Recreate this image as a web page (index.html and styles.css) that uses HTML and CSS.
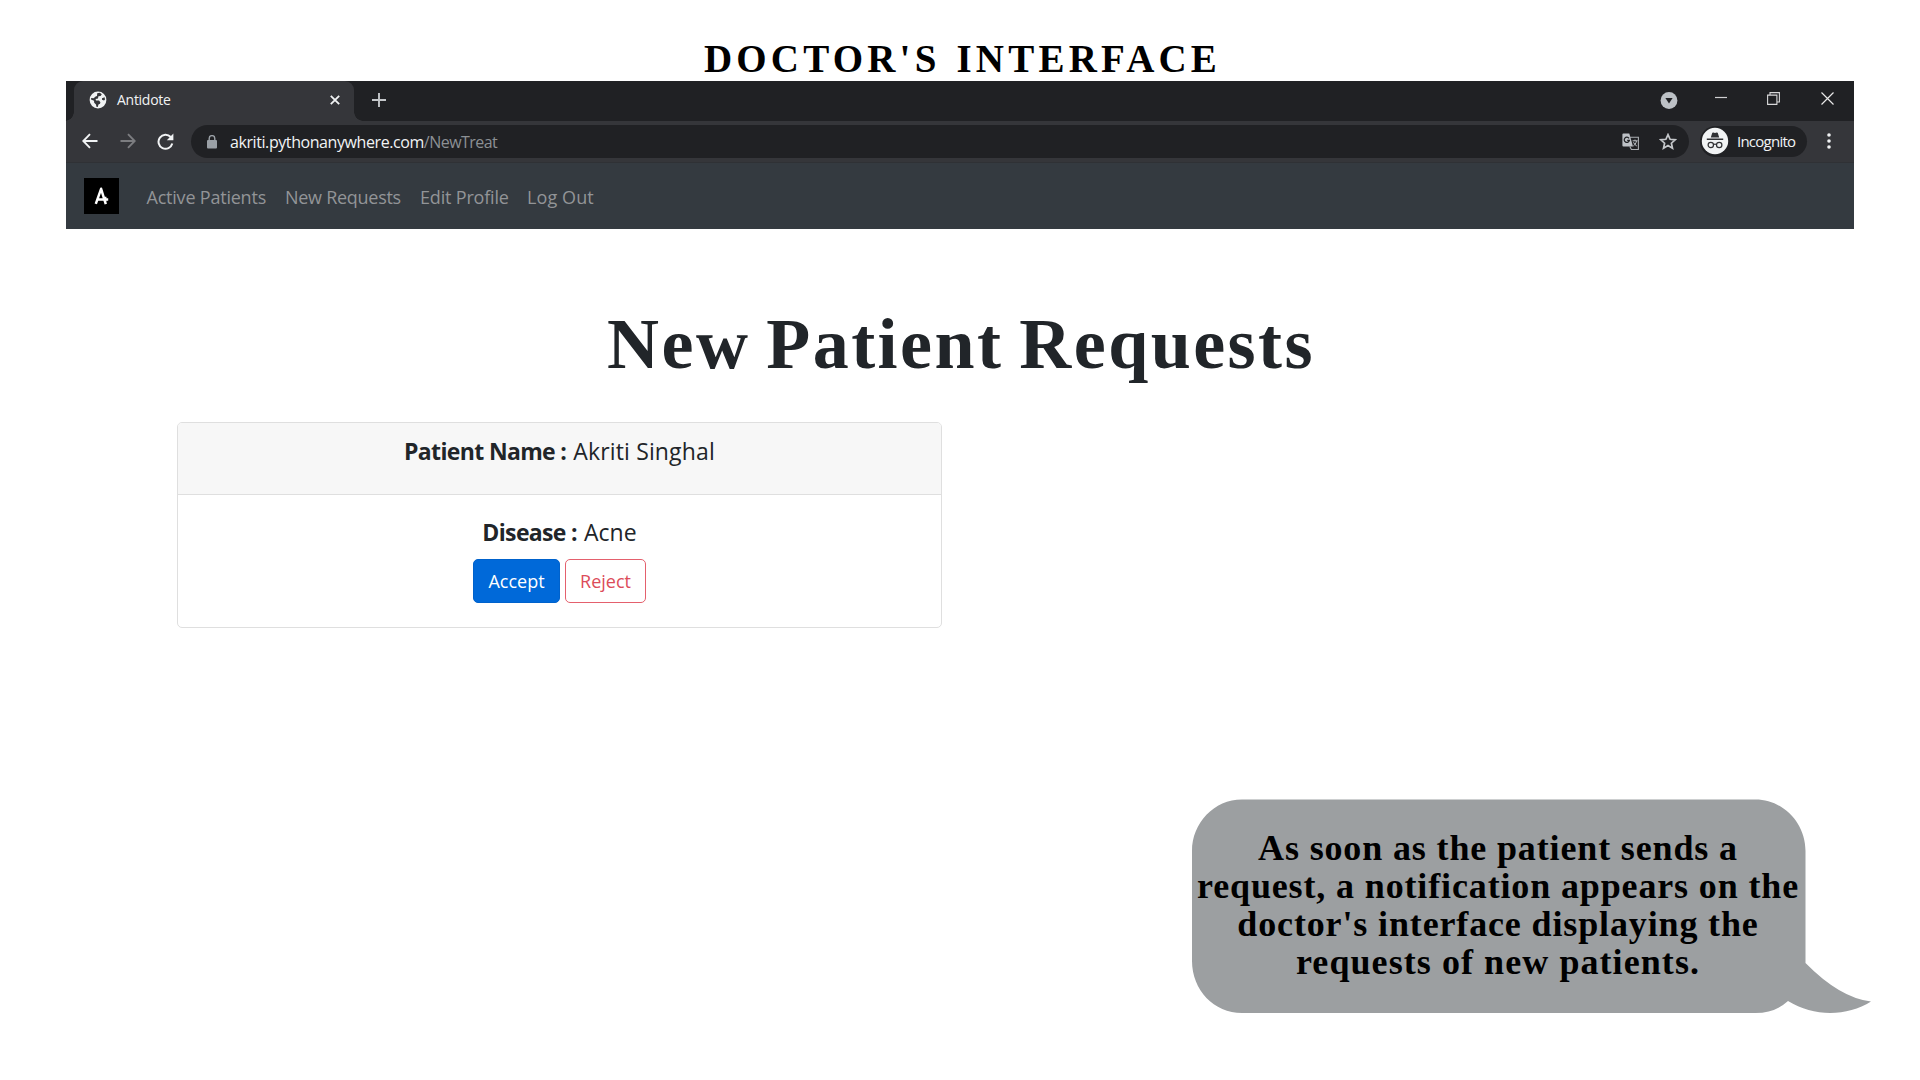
FILE: index.html
```html
<!DOCTYPE html>
<html lang="en">
<head>
<meta charset="utf-8">
<title>Doctor's Interface</title>
<link rel="stylesheet" href="styles.css">
</head>
<body>
<h2 class="slide-title">DOCTOR'S INTERFACE</h2>
<section class="browser">
  <div class="tabstrip">
    <div class="tab">
      <svg class="globe" width="18" height="18" viewBox="0 0 18 18"><circle cx="9" cy="9" r="8.4" fill="#f1f3f4"/><path d="M8.2 2.3 10.8 1.8 12.8 3.2 11.6 5 9.4 5.2 9 7.4 6.6 8 7 9.4 10 9.6 11.4 11.2 11 12.8 9.4 13.6 8.8 16 7.4 15.8 7 13.4 5.2 11.8 5 9.8 2 8.6 2.2 7 4.6 7.2 6.6 5.6 8 5Z" fill="#35363a"/><path d="M13 7.2 15.6 6.2 16 8.4 15 9.4 13 8.8Z" fill="#35363a"/></svg>
      <span class="tab-name">Antidote</span>
      <svg class="tab-close" width="10" height="10" viewBox="0 0 10 10"><path d="M.8.8 9.2 9.2M9.2.8.8 9.2" stroke="#f1f3f4" stroke-width="1.8"/></svg>
    </div>
    <svg class="plus" width="14" height="14" viewBox="0 0 14 14"><path d="M7 0V14M0 7H14" stroke="#c4c7ca" stroke-width="1.9"/></svg>
    <div class="window-controls">
      <svg width="18" height="18" viewBox="0 0 18 18"><circle cx="9" cy="9.5" r="8.4" fill="#bdc1c6"/><path d="M5.4 7H12.6L9 12.6Z" fill="#202124"/></svg>
      <svg class="minimise" width="12" height="12" viewBox="0 0 12 12"><path d="M0 5.5H12" stroke="#d0d0d1" stroke-width="1.2"/></svg>
      <svg class="restore" width="13" height="13" viewBox="0 0 13 13"><path d="M.6 3.1H9.9V12.4H.6ZM3 3V.6H12.4V10H10" fill="none" stroke="#d8d8d9" stroke-width="1.1"/></svg>
      <svg class="win-close" width="13" height="13" viewBox="0 0 13 13"><path d="M.5.5 12.5 12.5M12.5.5.5 12.5" stroke="#e8e8e8" stroke-width="1.2"/></svg>
    </div>
  </div>
  <div class="toolbar">
    <svg class="back" width="16" height="16" viewBox="0 0 16 16"><path d="M15.5 8H1.5M8 1.2 1.3 8 8 14.8" fill="none" stroke="#f1f3f4" stroke-width="1.9"/></svg>
    <svg class="forward" width="16" height="16" viewBox="0 0 16 16"><path d="M.5 8H14.5M8 1.2 14.7 8 8 14.8" fill="none" stroke="#7c7d80" stroke-width="1.9"/></svg>
    <svg class="reload" width="17" height="17" viewBox="0 0 17 17"><path d="M15.3 10.5A7 7 0 1 1 13.7 4" fill="none" stroke="#f1f3f4" stroke-width="2"/><path d="M16.4.6V7.2H9.8Z" fill="#f1f3f4"/></svg>
    <div class="address">
      <svg class="lock" width="10" height="14" viewBox="0 0 10 14"><path d="M2.2 6V3.4a2.8 2.8 0 0 1 5.6 0V6" fill="none" stroke="#9aa0a6" stroke-width="1.4"/><rect y="5" width="10" height="8.5" rx="1" fill="#9aa0a6"/></svg>
      <span class="host">akriti.pythonanywhere.com</span><span class="path">/NewTreat</span>
      <svg class="translate" width="18" height="18" viewBox="0 0 18 18"><path d="M8 4.2H16.4V16.5H9.4L7.8 13.6" fill="none" stroke="#a9adb1" stroke-width="1.1"/><path d="M1.4.5H7.3L11 13.6H1.4A1 1 0 0 1 .4 12.6V1.5A1 1 0 0 1 1.4.5Z" fill="#bdc1c6"/><path d="M7 5.3A2.6 2.6 0 1 0 7.4 7.3H5.2" fill="none" stroke="#202124" stroke-width="1.2"/><path d="M10.6 7.8H15.6M13 6.6V7.8M14.5 8C14 10.4 12.8 12 11.3 13M11.5 9.3C12.2 11 13.4 12.2 14.8 13" fill="none" stroke="#bdc1c6" stroke-width="1"/></svg>
      <svg class="star" width="18" height="17" viewBox="0 0 18 17"><path d="M9 1.6 11.1 6.3 16.2 6.8 12.4 10.2 13.5 15.2 9 12.6 4.5 15.2 5.6 10.2 1.8 6.8 6.9 6.3Z" fill="none" stroke="#c4c7ca" stroke-width="1.7"/></svg>
    </div>
    <div class="incognito">
      <svg width="28" height="28" viewBox="0 0 28 28"><circle cx="14" cy="14" r="13.2" fill="#f1f3f4"/><path d="M9.8 10.6 11.2 6Q11.5 5.3 12.3 5.5L14 6 15.7 5.5Q16.5 5.3 16.8 6L18.2 10.6ZM5.8 11.6H22.2V12.9H5.8Z" fill="#303134"/><circle cx="9.800" cy="18" r="2.700" fill="none" stroke="#303134" stroke-width="1.2"/><circle cx="18.2" cy="18" r="2.7" fill="none" stroke="#303134" stroke-width="1.2"/><path d="M12.5 17.6Q14 16.6 15.5 17.6" fill="none" stroke="#303134" stroke-width="1.2"/></svg>
      <span>Incognito</span>
    </div>
    <svg class="dots" width="4" height="16" viewBox="0 0 4 16"><g fill="#f1f3f4"><circle cx="2" cy="2" r="1.8"/><circle cx="2" cy="8" r="1.8"/><circle cx="2" cy="14" r="1.8"/></g></svg>
  </div>
  <nav class="navbar">
    <svg class="logo" width="35" height="36" viewBox="0 0 35 36"><rect width="35" height="36" fill="#000"/><path d="M11.8 25.8 17.1 10.8 21.8 26.2M13.2 21.4H24.2M21.2 18.8V23.4" fill="none" stroke="#fff" stroke-width="2.5" stroke-linejoin="round"/></svg>
    <a class="l1">Active Patients</a><a class="l2">New Requests</a><a class="l3">Edit Profile</a><a class="l4">Log Out</a>
  </nav>
</section>
<main>
  <h1>New Patient Requests</h1>
  <article class="card">
    <header><b>Patient Name :</b><span class="patient">Akriti Singhal</span></header>
    <div class="card-body">
      <p><b>Disease :</b><span>Acne</span></p>
      <div class="actions"><button class="accept">Accept</button><button class="reject">Reject</button></div>
    </div>
  </article>
</main>
<aside class="bubble">
  <svg class="bubble-shape" width="682" height="216" viewBox="0 0 682 216"><path d="M50 .5H563.500C591 .5 613.500 24 613.500 52V164Q648 199 679 202.500C655 217.500 622 218 596 202Q583 214 563.500 214H50C22 214 0 191 0 162V52C0 24 22 .5 50 .5Z" fill="#9c9fa1"/></svg>
  <p>As soon as the patient sends a<br>request, a notification appears on the<br>doctor's interface displaying the<br><span class="last">requests of new patients.</span></p>
</aside>
</body>
</html>
```
FILE: styles.css
```css
* { box-sizing: border-box; }
body { margin: 0; width: 1920px; height: 1080px; overflow: hidden; background: #fff; display: flex; flex-direction: column; font-family: "Open Sans", "Noto Sans", sans-serif; }
svg { display: block; flex: none; }
h1, h2, p { margin: 0; }
.slide-title { height: 81px; padding: 37px 0 0 5px; text-align: center; font: bold 39px/44px "Liberation Serif", serif; letter-spacing: 4.2px; word-spacing: 2px; color: #000; white-space: nowrap; }

.browser { width: 1788px; margin-left: 66px; flex: none; }
.tabstrip { height: 40px; background: #202124; display: flex; align-items: center; padding-left: 8px; }
.tab { position: relative; width: 280px; height: 40px; background: #35363a; border-radius: 9px 9px 0 0; display: flex; align-items: center; padding: 0 14px 2px 15px; }
.tab::before, .tab::after { content: ""; position: absolute; bottom: 0; width: 9px; height: 9px; }
.tab::before { left: -9px; background: radial-gradient(circle at 0 0, transparent 8.5px, #35363a 9px); }
.tab::after { right: -9px; background: radial-gradient(circle at 100% 0, transparent 8.5px, #35363a 9px); }
.tab-name { margin-left: 10px; font-size: 14px; line-height: 20px; letter-spacing: -.28px; color: #f1f3f4; }
.tab-close { margin-left: auto; }
.plus { margin: 0 0 2px 18px; }
.window-controls { margin-left: auto; height: 40px; display: flex; align-items: center; padding: 0 20px 2px 0; }
.minimise { margin: 0 0 5px 37px; }
.restore { margin: 0 0 4px 40px; }
.win-close { margin: 0 0 4px 41px; }

.toolbar { height: 42px; background: #35363a; display: flex; align-items: center; padding-left: 16px; border-bottom: 1px solid #2f3135; }
.back, .forward, .reload { margin-bottom: 1px; }
.forward { margin-left: 22px; }
.reload { margin-left: 21px; }
.address { width: 1498px; height: 33px; margin-left: 17px; border-radius: 17px; background: #202124; display: flex; align-items: center; padding-left: 16px; font-size: 16px; line-height: 24px; white-space: nowrap; }
.lock { margin-right: 13px; }
.host { color: #f1f3f4; letter-spacing: -.42px; }
.path { color: #8c9094; letter-spacing: -.53px; }
.translate { margin-left: auto; margin-right: 19px; }
.star { margin-right: 12px; }
.incognito { width: 107px; height: 31px; margin: 0 0 1px 11px; border-radius: 16px; background: #202124; display: flex; align-items: center; padding-left: 1px; gap: 8px; font-size: 15px; line-height: 20px; letter-spacing: -.76px; color: #f1f3f4; }
.incognito span { margin-bottom: 1px; }
.dots { margin: 0 0 1px 20px; }

.navbar { height: 65.5px; background: #343a40; display: flex; align-items: center; padding-left: 18px; font-size: 18px; line-height: 26px; color: #929497; white-space: nowrap; }
.navbar a { margin-top: 3px; }
.l1 { width: 138.5px; margin-left: 27.5px; letter-spacing: -.21px; }
.l2 { width: 135px; letter-spacing: -.28px; }
.l3 { width: 107px; letter-spacing: -.18px; }
.l4 { letter-spacing: .1px; }

h1 { margin-top: 75px; height: 118px; padding-left: 2px; text-align: center; font: bold 72px/80px "Liberation Serif", serif; letter-spacing: 2.45px; word-spacing: -4.5px; color: #212529; white-space: nowrap; }
.card { width: 765px; height: 206px; margin-left: 177px; border: 1px solid #dfdfdf; border-radius: 5px; color: #212529; font-size: 23px; line-height: 30px; overflow: hidden; }
.card b { font-weight: 700; letter-spacing: -.65px; margin-right: 7px; }
.card header { height: 72px; background: #f7f7f7; border-bottom: 1px solid #dfdfdf; padding-top: 13px; text-align: center; }
.patient { letter-spacing: .15px; }
.card-body { padding-top: 22px; text-align: center; }
.actions { margin-top: 12px; display: flex; justify-content: center; gap: 5px; }
button { height: 44px; border: 1px solid; border-radius: 5px; padding: 1px 0 0; font: 18px/26px "Open Sans", sans-serif; }
.accept { width: 87px; background: #0069d9; border-color: #0062cc; color: #fff; }
.reject { width: 81px; background: #fff; border-color: #e4606d; color: #dc4c5a; }

.bubble { position: absolute; left: 1192px; top: 799px; width: 682px; height: 216px; }
.bubble-shape { position: absolute; left: 0; top: 0; }
.bubble p { position: relative; width: 612px; padding-top: 30px; text-align: center; font: bold 36px/38px "Liberation Serif", serif; letter-spacing: .86px; color: #000; white-space: nowrap; }
.last { letter-spacing: 1.07px; }
```
